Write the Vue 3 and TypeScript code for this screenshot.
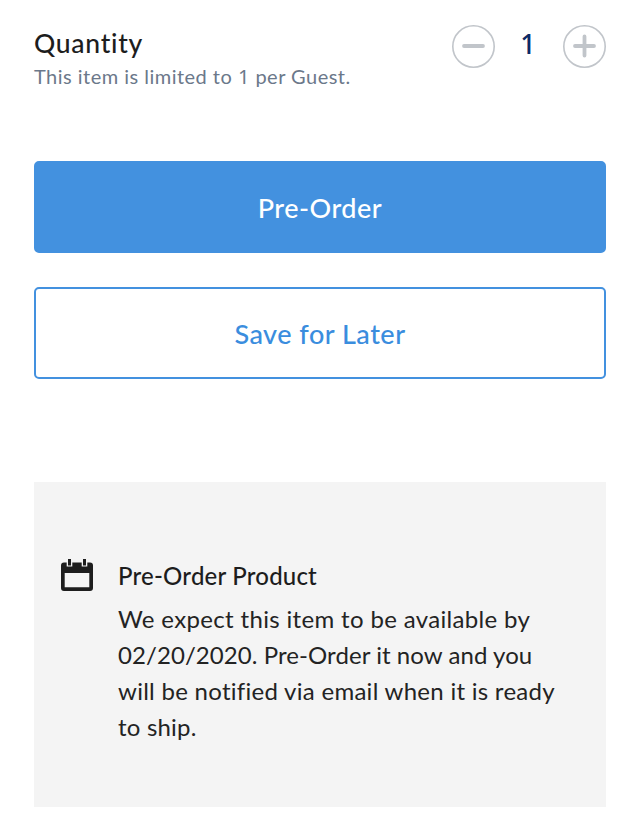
<script setup lang="ts">
import { ref } from 'vue';

const LIMIT = 1;
const quantity = ref<number>(1);

const decrease = () => { if (quantity.value > 1) quantity.value--; };
const increase = () => { if (quantity.value < LIMIT) quantity.value++; };
</script>

<template>
  <main class="product">
    <section class="quantity">
      <div class="info">
        <h2>Quantity</h2>
        <p>This item is limited to <span class="limit">{{ LIMIT }}</span> per Guest.</p>
      </div>
      <div class="stepper">
        <button aria-label="Decrease quantity" @click="decrease">
          <svg width="43" height="43" viewBox="0 0 43 43">
            <circle cx="21.5" cy="21.5" r="20.7" />
            <path d="M12 21h19" />
          </svg>
        </button>
        <span class="count">{{ quantity }}</span>
        <button aria-label="Increase quantity" @click="increase">
          <svg width="43" height="43" viewBox="0 0 43 43">
            <circle cx="21.5" cy="21.5" r="20.7" />
            <path d="M12 21h19M21.5 11.5v19" />
          </svg>
        </button>
      </div>
    </section>

    <button class="btn primary">Pre-Order</button>
    <button class="btn secondary">Save for Later</button>

    <section class="notice">
      <svg class="calendar" width="32" height="32" viewBox="0 0 32 32">
        <path fill-rule="evenodd" d="M3 3.5h2.7V7.5h5.6V3.5h9.4V7.5h5.6V3.5H29a3 3 0 0 1 3 3V29a3 3 0 0 1-3 3H3a3 3 0 0 1-3-3V6.500a3 3 0 0 1 3-3zM3.700 14v14.200h24.600V14z" />
        <path d="M7 0h3v6.500H7zM22 0h3v6.500h-3z" />
      </svg>
      <div class="text">
        <h3>Pre-Order Product</h3>
        <p>
          <span class="l1">We expect this item to be available by</span><br>
          <span class="l2">02/20/2020. Pre-Order it now and you</span><br>
          <span class="l3">will be notified via email when it is ready</span><br>
          <span class="l4">to ship.</span>
        </p>
      </div>
    </section>
  </main>
</template>

<style>
body{margin:0;background:#fff}
</style>

<style scoped>
.product{box-sizing:border-box;height:838px;padding:25px 34px 0;font-family:Lato,"Liberation Sans",sans-serif;color:#1d1d1d}
h2,h3,p{margin:0}
button{padding:0;border:0;background:none;font-family:inherit;cursor:pointer}
.quantity{display:flex;justify-content:space-between;height:136px}
h2{font-size:26.5px;line-height:36px;font-weight:500;letter-spacing:.72px}
.info p{font-size:20px;line-height:31px;color:#6b788a;letter-spacing:.48px}
.limit{font-family:"Noto Sans",sans-serif;line-height:1}
.stepper{display:flex;height:43px}
.stepper button{width:43px;height:43px}
.stepper svg{display:block;fill:none;stroke:#c1c5ca}
.stepper circle{stroke-width:1.6}
.stepper path{stroke-width:3.8;stroke-linecap:round}
.count{box-sizing:border-box;width:68px;padding-right:2px;text-align:center;font-family:"Noto Sans",sans-serif;font-size:27px;line-height:38px;font-weight:500;color:#0b2a66}
.btn{display:block;box-sizing:border-box;width:100%;height:92px;border:2px solid #4391df;border-radius:5px;font-size:27px;font-weight:500;letter-spacing:.5px}
.primary{background:#4391df;color:#fff}
.secondary{margin-top:34.4px;color:#3a8dde}
.notice{display:flex;align-items:flex-start;gap:25px;box-sizing:border-box;height:325px;margin-top:102.6px;padding:77px 27px 0;background:#f4f4f4}
.calendar{flex:none;fill:#1d1d1d}
h3{font-size:24px;line-height:34px;font-weight:500;letter-spacing:.2px}
.text p{margin-top:8.500px;font-size:24px;line-height:36px;white-space:nowrap;color:#232323}
.l1{letter-spacing:.34px}
.l2{letter-spacing:.07px}
.l3{letter-spacing:.28px}
.l4{letter-spacing:.2px}
</style>
